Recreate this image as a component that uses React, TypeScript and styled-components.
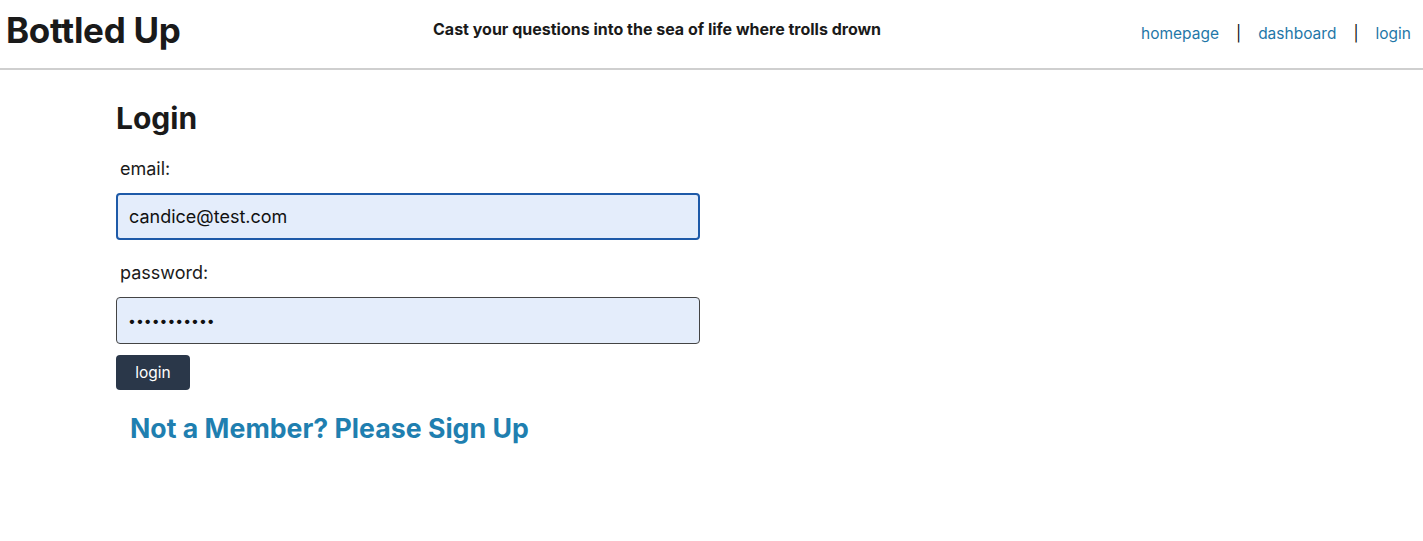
import React from 'react';
import styled, { createGlobalStyle } from 'styled-components';

const GlobalStyle = createGlobalStyle`
  body {
    margin: 0;
    background: #fff;
    font-family: Inter, "Noto Sans", sans-serif;
    color: #1a1a1a;
  }
`;

const Header = styled.header`
  display: flex;
  align-items: flex-start;
  height: 68px;
  border-bottom: 2px solid #cfcfcf;
  padding: 0 12px 0 6px;
`;

const Brand = styled.h1`
  flex: 0 0 427px;
  margin: 9px 0 0;
  font-size: 35px;
  font-weight: 700;
  letter-spacing: -0.3px;
`;

const Tagline = styled.p`
  margin: 19px 0 0;
  font-size: 16px;
  font-weight: 700;
`;

const Nav = styled.nav`
  display: flex;
  align-items: center;
  gap: 17px;
  margin: 24px 0 0 auto;
  font-size: 15.5px;
`;

const NavLink = styled.a`
  color: #1f77a8;
  text-decoration: none;
`;

const Divider = styled.span`
  color: #111;
`;

const Main = styled.main`
  padding: 30px 0 0 116px;
  width: 584px;
`;

const Title = styled.h2`
  margin: 0 0 22px;
  font-size: 30px;
  font-weight: 700;
`;

const Form = styled.form`
  display: flex;
  flex-direction: column;
`;

const Label = styled.label`
  font-size: 18px;
  margin: 0 0 14px 4px;
`;

const Input = styled.input<{ $focused?: boolean }>`
  box-sizing: border-box;
  width: 584px;
  height: 47px;
  padding: 0 11px;
  font-family: Inter, "Noto Sans", sans-serif;
  font-size: 18px;
  color: #111;
  background: #e4edfb;
  border: ${(p) => (p.$focused ? '2px solid #1e5aa8' : '1px solid #444')};
  border-radius: 4px;
  margin-bottom: ${(p) => (p.$focused ? '22px' : '11px')};
  outline: none;

  &[type='password'] {
    font-size: 14px;
  }
`;

const Button = styled.button`
  align-self: flex-start;
  width: 74px;
  height: 35px;
  background: #2a3749;
  color: #fff;
  border: none;
  border-radius: 4px;
  font-family: Inter, "Noto Sans", sans-serif;
  font-size: 15.5px;
  cursor: pointer;
`;

const SignUp = styled.a`
  display: inline-block;
  margin: 22px 0 0 14px;
  font-size: 26.7px;
  font-weight: 700;
  color: #1f7fb0;
  text-decoration: none;
  white-space: nowrap;
`;

const App: React.FC = () => {
  return (
    <>
      <GlobalStyle />
      <Header>
        <Brand>Bottled Up</Brand>
        <Tagline>Cast your questions into the sea of life where trolls drown</Tagline>
        <Nav>
          <NavLink href="#">homepage</NavLink>
          <Divider>|</Divider>
          <NavLink href="#">dashboard</NavLink>
          <Divider>|</Divider>
          <NavLink href="#">login</NavLink>
        </Nav>
      </Header>
      <Main>
        <Title>Login</Title>
        <Form onSubmit={(e) => e.preventDefault()}>
          <Label htmlFor="email">email:</Label>
          <Input id="email" $focused defaultValue="candice@test.com" />
          <Label htmlFor="password">password:</Label>
          <Input id="password" type="password" defaultValue="password123" />
          <Button type="submit">login</Button>
        </Form>
        <SignUp href="#">Not a Member? Please Sign Up</SignUp>
      </Main>
    </>
  );
};

export default App;
